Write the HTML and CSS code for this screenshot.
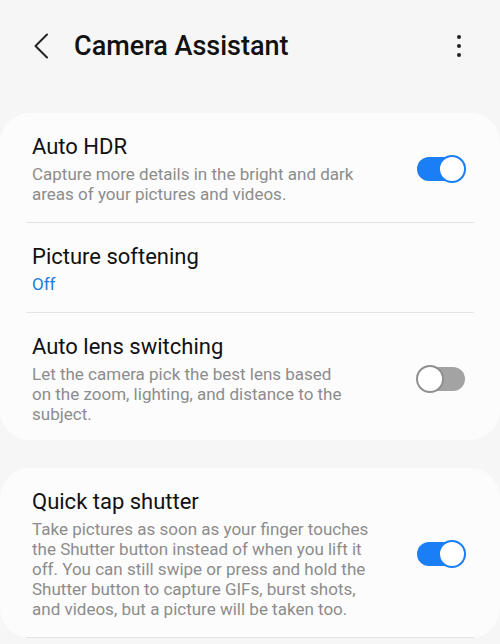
FILE: index.html
```html
<!DOCTYPE html>
<html lang="en">
<head>
    <meta charset="UTF-8">
    <meta name="viewport" content="width=device-width, initial-scale=1.0">
    <title>Camera Assistant</title>
    <link rel="stylesheet" href="styles.css">
</head>
<body>
    <div class="header">
        <svg class="back" width="16" height="26" viewBox="0 0 16 26">
            <path d="M14 1.5 L2.5 13 L14 24.5" fill="none" stroke="#222" stroke-width="2" stroke-linecap="round" stroke-linejoin="round"/>
        </svg>
        <div class="title">Camera Assistant</div>
        <div class="more">
            <span></span><span></span><span></span>
        </div>
    </div>

    <div class="card">
        <div class="item">
            <div class="text">
                <div class="name">Auto HDR</div>
                <div class="desc">Capture more details in the bright and dark<br>areas of your pictures and videos.</div>
            </div>
            <div class="switch on"><div class="thumb"></div></div>
        </div>
        <div class="item">
            <div class="text">
                <div class="name">Picture softening</div>
                <div class="value">Off</div>
            </div>
        </div>
        <div class="item">
            <div class="text">
                <div class="name">Auto lens switching</div>
                <div class="desc">Let the camera pick the best lens based<br>on the zoom, lighting, and distance to the<br>subject.</div>
            </div>
            <div class="switch"><div class="thumb"></div></div>
        </div>
    </div>

    <div class="card">
        <div class="item">
            <div class="text">
                <div class="name">Quick tap shutter</div>
                <div class="desc">Take pictures as soon as your finger touches<br>the Shutter button instead of when you lift it<br>off. You can still swipe or press and hold the<br>Shutter button to capture GIFs, burst shots,<br>and videos, but a picture will be taken too.</div>
            </div>
            <div class="switch on"><div class="thumb"></div></div>
        </div>
    </div>
</body>
</html>
```

FILE: styles.css
```css
body {
    font-family: Roboto, "Noto Sans", Arial, sans-serif;
    background-color: #f6f6f6;
    margin: 0;
    padding: 0;
    color: #111;
}

.header {
    height: 92px;
    margin-bottom: 21px;
    display: flex;
    align-items: center;
    padding: 0 32px 0 33px;
}

.back {
    flex-shrink: 0;
}

.title {
    font-size: 27px;
    font-weight: 500;
    margin-left: 25px;
    flex: 1;
}

.more {
    display: flex;
    flex-direction: column;
    gap: 5px;
    margin-right: 7px;
}

.more span {
    width: 4px;
    height: 4px;
    border-radius: 50%;
    background-color: #222;
}

.card {
    background-color: #fcfcfc;
    border-radius: 30px;
    padding: 0 26px;
    margin-bottom: 28px;
}

.item {
    display: flex;
    align-items: center;
    padding: 21px 9px 18px 6px;
    border-bottom: 1px solid #e4e4e4;
}

.card .item:last-child {
    border-bottom: none;
    padding-bottom: 16px;
}

.card:last-of-type .item:last-child {
    border-bottom: 1px solid #e4e4e4;
    padding-bottom: 18px;
}

.text {
    flex: 1;
    white-space: nowrap;
}

.name {
    font-size: 22px;
    line-height: 26px;
}

.desc {
    font-size: 17px;
    line-height: 20px;
    color: #8c8c8c;
    margin-top: 4px;
}

.value {
    font-size: 17px;
    line-height: 20px;
    color: #1f7bd8;
    margin-top: 4px;
}

.switch {
    flex-shrink: 0;
    width: 48px;
    height: 24px;
    border-radius: 12px;
    background-color: #a3a3a3;
    position: relative;
}

.switch .thumb {
    position: absolute;
    top: -2px;
    left: -1px;
    width: 24px;
    height: 24px;
    border-radius: 50%;
    background-color: #fff;
    border: 2px solid #8f8f8f;
}

.switch.on {
    background-color: #1a7ef4;
}

.switch.on .thumb {
    left: auto;
    right: -1px;
    border-color: #1a7ef4;
}
```
